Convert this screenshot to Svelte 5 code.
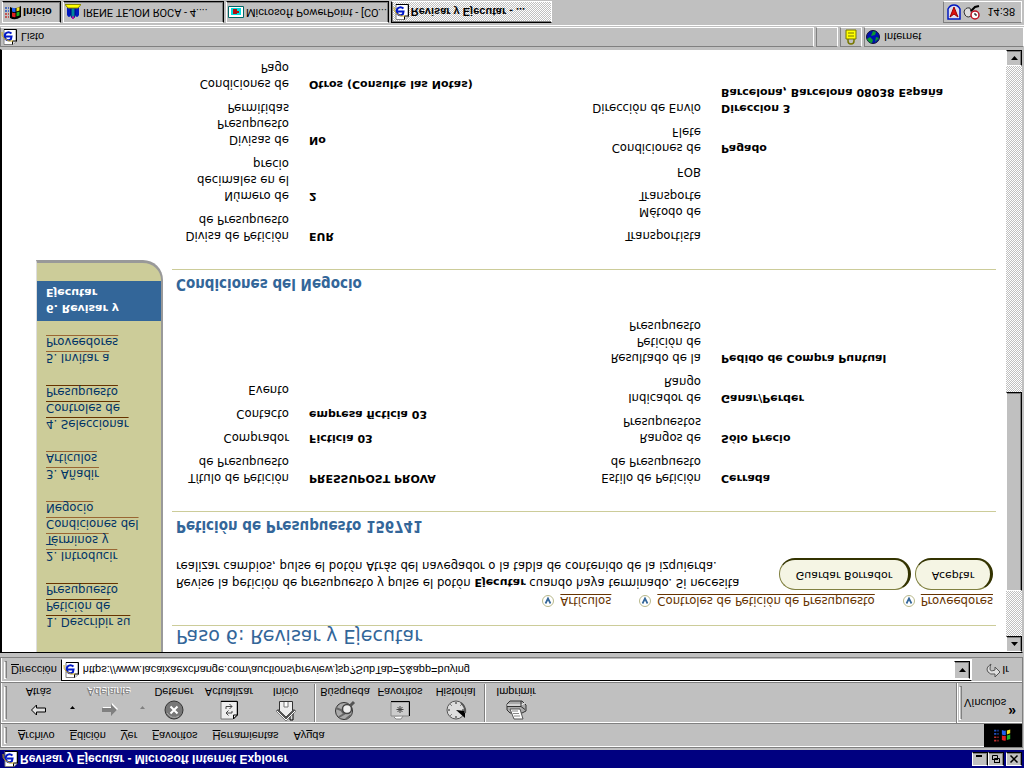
<script>
  const steps = [
    ['1. Describir su', 'Petición de', 'Presupuesto'],
    ['2. Introducir', 'Términos y', 'Condiciones del', 'Negocio'],
    ['3. Añadir', 'Artículos'],
    ['4. Seleccionar', 'Controles de', 'Presupuesto'],
    ['5. Invitar a', 'Proveedores']
  ];
  const visited = [0, 3];
  const tools = [
    { id: 'back', label: 'Atrás', w: 70, drop: true },
    { id: 'fwd', label: 'Adelante', w: 70, drop: true, off: true },
    { id: 'stop', label: 'Detener', w: 54 },
    { id: 'reload', label: 'Actualizar', w: 56 },
    { id: 'home', label: 'Inicio', w: 58, sep: true },
    { id: 'search', label: 'Búsqueda', w: 56 },
    { id: 'fav', label: 'Favoritos', w: 54 },
    { id: 'hist', label: 'Historial', w: 58, sep: true },
    { id: 'print', label: 'Imprimir', w: 58 }
  ];
  const menus = ['Archivo', 'Edición', 'Ver', 'Favoritos', 'Herramientas', 'Ayuda'];
  const sections = [
    {
      title: 'Petición de Presupuesto 156741',
      cols: [
        [
          [['Título de Petición', 'de Presupuesto'], ['PRESSUPOST PROVA']],
          [['Comprador'], ['Ficticia 03']],
          [['Contacto'], ['empresa ficticia 03']],
          [['Evento'], []]
        ],
        [
          [['Estilo de Petición', 'de Presupuesto'], ['Cerrada']],
          [['Rangos de', 'Presupuestos'], ['Sólo Precio']],
          [['Indicador de', 'Rango'], ['Ganar/Perder']],
          [['Resultado de la', 'Petición de', 'Presupuesto'], ['Pedido de Compra Puntual']]
        ]
      ]
    },
    {
      title: 'Condiciones del Negocio',
      cols: [
        [
          [['Divisa de Petición', 'de Presupuesto'], ['EUR']],
          [['Número de', 'decimales en el', 'precio'], ['2']],
          [['Divisas de', 'Presupuesto', 'Permitidas'], ['No']],
          [['Condiciones de', 'Pago'], ['Otros (Consulte las Notas)']],
          [['Dirección de'], ['Direccion 3']]
        ],
        [
          [['Transportista'], []],
          [['Método de', 'Transporte'], []],
          [['FOB'], []],
          [['Condiciones de', 'Flete'], ['Pagado']],
          [['Dirección de Envío'], ['Direccion 3', 'Barcelona, Barcelona 08038 España']]
        ]
      ]
    }
  ];
</script>

{#snippet page(s)}
  <svg width={s} height={s} viewBox="0 0 16 16" aria-hidden="true">
    <path d="M3 .5h9l3 3v12H3z" fill="#fff" stroke="#808080" />
    <path d="M15.500 3.500v12H3" fill="none" stroke="#000" />
    <path d="M11.500 .5v3.500h4" fill="#ddd" stroke="#000" />
    <path d="M10.500 11.500q-3 2.500-6 0q-1.500-3 0-5.500q3-2.500 5.500 0l.5 2.500H5" fill="none" stroke="#0018c8" stroke-width="2" />
    <path d="M1 13Q0 9 4 6t8-2" fill="none" stroke="#c8a818" />
  </svg>
{/snippet}

{#snippet toolIcon(id)}
  <svg width="22" height="22" viewBox="0 0 22 22" aria-hidden="true">
    {#if id === 'back'}
      <path d="M3.500 11l5-5v3h9v4h-9v3z" fill="#e0e0e0" stroke="#000" />
    {:else if id === 'fwd'}
      <path d="M20 12l-6-6v4H5v4h9v4z" fill="#fff" />
      <path d="M19 11l-6-6v4H4v4h9v4z" fill="#808080" />
    {:else if id === 'stop'}
      <circle cx="11" cy="11" r="9" fill="#777" stroke="#333" />
      <path d="M4 8q5-7 12-3" stroke="#aaa" fill="none" />
      <path d="M7.500 7.500l7 7m0-7l-7 7" stroke="#fff" stroke-width="2" />
    {:else if id === 'reload'}
      <path d="M3 2h16v14l-4 4H3z" fill="#eee" stroke="#777" transform="matrix(1 0 0 -1 0 22)" />
      <path d="M3 2.500h16.500V16l-4 4v-4h4" fill="none" stroke="#000" transform="matrix(1 0 0 -1 0 22)" />
      <path d="M14 10V8H8m2.500-2.500L8 8l2.500 2.500M8 12v2.500h6m-2.500-2.500l2.500 2.500-2.500 2.500" fill="none" stroke="#444" />
    {:else if id === 'home'}
      <path d="M4.500 10v9.500h13V10L11 4z" fill="#eee" stroke="#333" />
      <path d="M15 7V1h3v10" fill="#ddd" stroke="#000" />
      <path d="M2 11l9-9 9 9" fill="none" stroke="#555" stroke-width="3" />
      <path d="M2 10l9-9 9 9" fill="none" stroke="#fff" />
      <path d="M9 19v-5h4v5" fill="#fff" stroke="#777" />
    {:else if id === 'search'}
      <circle cx="10" cy="10" r="8.500" fill="#aaa" stroke="#333" />
      <path d="M5 4l5 3-3 4-5 2M12 2l5 4" stroke="#666" fill="none" stroke-width="2" />
      <circle cx="13" cy="12" r="4.500" fill="#eee" stroke="#444" stroke-width="1.500" />
      <path d="M16 15l4 4" stroke="#555" stroke-width="3" />
    {:else if id === 'fav'}
      <path d="M5 4l2-2h5l2 3" fill="#fff" stroke="#888" />
      <path d="M2 5h18v14H2z" fill="#ccc" stroke="#888" />
      <path d="M20.500 5v14.500H2" stroke="#000" fill="none" />
      <path d="M11 8v7m-3.500-3.500h7M8.500 9l5 5m0-5l-5 5" stroke="#444" />
    {:else if id === 'hist'}
      <circle cx="11" cy="11" r="9" fill="#ddd" stroke="#555" />
      <path d="M11 3v2m0 12v2M3 11h2m12 0h2M5.500 5.500l1 1m-1 10l1-1m9 0l1 1" stroke="#222" />
      <path d="M11 11l9-8v7z" fill="#000" />
      <path d="M20 8q1 6-4 10" stroke="#555" stroke-width="2" fill="none" />
    {:else}
      <path d="M2 17l3 3h12l4-4v-6l-4-2H5l-3 3z" fill="#aaa" stroke="#333" />
      <path d="M2 16h14l4 2" fill="none" stroke="#fff" />
      <path d="M2 14.500h14l4-3M16 15v5" fill="none" stroke="#333" />
      <path d="M9 2h9l-3 10H5z" fill="#fff" stroke="#555" />
      <path d="M9 5h6M8 7.500h6M7 10h6" stroke="#888" />
    {/if}
  </svg>
{/snippet}

{#snippet winflag(s)}
  <svg width={s} height={s} viewBox="0 0 18 18" aria-hidden="true">
    <path d="M6 3q5-3 11 1v11q-6-4-11-1z" fill="#000" />
    <path d="M8 4.500q2-1 3.500-.5v4Q10 8 8 8.500z" fill="#e02020" />
    <path d="M12.500 4.500l3 1v4l-3-1z" fill="#20b020" />
    <path d="M8 9.500q2-1 3.500-.5v4q-2-.3-3.500.5z" fill="#2060f0" />
    <path d="M12.500 9.500l3 1v3.500l-3-1z" fill="#f0e020" />
    <path d="M1 4h4M1 7h4" stroke="#c03030" stroke-width="1.500" stroke-dasharray="2 1" />
    <path d="M1 10h4M1 13h4" stroke="#2050c0" stroke-width="1.500" stroke-dasharray="2 1" />
  </svg>
{/snippet}

<div class="screen">
  <header class="title">
    {@render page(16)}
    <h1>Revisar y Ejecutar - Microsoft Internet Explorer</h1>
    <button class="cap" aria-label="Minimizar"><svg width="10" height="10"><path d="M1 8h6" stroke="#000" stroke-width="2" /></svg></button>
    <button class="cap" aria-label="Restaurar"><svg width="10" height="10"><path d="M3.500 1.500h5v4h-5zM3 1.500h6M1.500 4.500h5v4h-5zM1 4.500h6" fill="none" stroke="#000" /></svg></button>
    <button class="cap last" aria-label="Cerrar"><svg width="10" height="10"><path d="M1.500 1.500l7 7m0-7l-7 7" stroke="#000" stroke-width="1.500" /></svg></button>
  </header>

  <nav class="band menu">
    <i class="grip"></i>
    {#each menus as m}
      {#if m === 'Ayuda'}
        <button>Ay<u>u</u>da</button>
      {:else}
        <button><u>{m[0]}</u>{m.slice(1)}</button>
      {/if}
    {/each}
    <span class="logo">{@render winflag(20)}</span>
  </nav>

  <div class="band tools">
    <i class="grip"></i>
    {#each tools as t}
      <button class="tool" class:off={t.off} class:sep={t.sep} style:width="{t.w}px" disabled={t.off}>
        <span class="face">{@render toolIcon(t.id)}<span>{t.label}</span></span>
        {#if t.drop}<svg class="drop" width="5" height="3"><path d="M0 0h5L2.500 3z" fill="currentColor" /></svg>{/if}
      </button>
    {/each}
    <div class="links"><i class="grip"></i><button>Vínculos</button><b>»</b></div>
  </div>

  <form class="band address" onsubmit={(e) => e.preventDefault()}>
    <i class="grip"></i>
    <label for="url"><u>D</u>irección</label>
    <div class="field">
      {@render page(16)}
      <input id="url" value="https://www.lacaixaexchange.com/auctions/preview.jsp?SubTab=2&app=buying" />
      <button type="button" class="bevel" aria-label="Abrir lista"><svg width="7" height="4"><path d="M0 0h7L3.500 4z" /></svg></button>
    </div>
    <button class="go">
      <svg width="16" height="16" viewBox="0 0 16 16" aria-hidden="true"><path d="M6 14Q0 10 3 6q2-3 7-2V1l5 5-5 5V8Q5 6 5 9q0 3 1 5z" fill="#ddd" stroke="#555" /></svg>
      Ir
    </button>
  </form>

  <div class="view">
    <main>
      <aside>
        {#each steps as s, i}
          <a href="#paso" class:seen={visited.includes(i)}>{#each s as line}<span>{line}</span><br />{/each}</a>
        {/each}
        <strong>6. Revisar y<br />Ejecutar</strong>
      </aside>
      <article>
        <h2 class="big">Paso 6: Revisar y Ejecutar</h2>
        <nav class="jump">
          {#each ['Artículos', 'Controles de Petición de Presupuesto', 'Proveedores'] as j}
            <span><svg width="12" height="12" viewBox="0 0 12 12" aria-hidden="true"><circle cx="6" cy="6" r="5.500" fill="#fff" stroke="#b8b88a" /><path d="M3.500 3.500L6 8.500l2.500-5" fill="none" stroke="#369" stroke-width="1.700" /></svg><a href="#seccion">{j}</a></span>
          {/each}
        </nav>
        <div class="intro">
          <p>Revise la petición de presupuesto y pulse el botón <b>Ejecutar</b> cuando haya terminado. Si necesita<br />realizar cambios, pulse el botón Atrás del navegador o la tabla de contenido de la izquierda.</p>
          <button class="pill wide">Guardar Borrador</button>
          <button class="pill">Aceptar</button>
        </div>
        {#each sections as s}
          <section>
            <h2>{s.title}</h2>
            <div class="cols">
              {#each s.cols as col}
                <dl>
                  {#each col as [k, v]}
                    <dt>{#each k as l, i}{#if i}<br />{/if}{l}{/each}</dt>
                    <dd>{#each v as l, i}{#if i}<br />{/if}{l}{/each}</dd>
                  {/each}
                </dl>
              {/each}
            </div>
          </section>
        {/each}
      </article>
    </main>
    <div class="bar">
      <button class="bevel" aria-label="Subir"><svg width="7" height="4"><path d="M0 4h7L3.500 0z" /></svg></button>
      <span class="gap"></span>
      <span class="thumb bevel"></span>
      <span class="rest"></span>
      <button class="bevel" aria-label="Bajar"><svg width="7" height="4"><path d="M0 0h7L3.500 4z" /></svg></button>
    </div>
  </div>

  <div class="status">
    <span class="main">{@render page(16)}Listo</span>
    <span class="cell"></span>
    <span class="cell"><svg width="14" height="16" viewBox="0 0 14 16" aria-hidden="true"><path d="M4 6V4q0-3 3-3t3 3v2" fill="none" stroke="#770" stroke-width="1.500" /><path d="M2 6h10v9H2z" fill="#ff0" stroke="#770" /><path d="M4 9h6M4 12h6" stroke="#770" /></svg></span>
    <span class="zone"><svg width="14" height="14" viewBox="0 0 14 14" aria-hidden="true"><circle cx="7" cy="7" r="6.500" fill="#0010b0" stroke="#113" /><path d="M1 5q2-4 5-4l1 3-3 3zM9 2l4 4-3 1zM5 8l4 1 1 3-3 1z" fill="#0a9a30" /></svg>Internet</span>
  </div>

  <footer>
    <button class="task start">{@render winflag(18)}<b>Inicio</b></button>
    <button class="task"><svg width="16" height="16" viewBox="0 0 16 16" aria-hidden="true"><path d="M2 5q2-4 4 0v7H2zM10 5q2-4 4 0v7h-4z" fill="#0018c0" /><path d="M6 4q2-5 4 0v8H6z" fill="#089" stroke="#008" /><path d="M8 1v3M7 2h2" stroke="#e0a" /><path d="M3 12h10l3 3.500H0z" fill="#ff0" stroke="#880" /></svg><span>IRENE TEJON ROCA - 4....</span></button>
    <button class="task"><svg width="16" height="16" viewBox="0 0 16 16" aria-hidden="true"><path d="M.5 2.500h15v11H.5z" fill="#fff" stroke="#066" /><path d="M3 5h10v7H3z" fill="#0dd" /><path d="M5 6h4v5H5zM9 7h2v2H9z" fill="#b01010" /></svg><span>Microsoft PowerPoint - [CO...</span></button>
    <button class="task on">{@render page(16)}<b>Revisar y Ejecutar - ...</b></button>
    <div class="tray">
      <svg width="14" height="16" viewBox="0 0 14 16" aria-hidden="true"><path d="M1 1v10q2 4 6 4t6-4V1z" fill="#dde" stroke="#0018c0" stroke-width="1.500" /><path d="M3 3l4 10 4-10-4 3z" fill="#e01010" stroke="#900" /></svg>
      <svg width="18" height="16" viewBox="0 0 18 16" aria-hidden="true"><path d="M1 8q1 5 6 4l2-7q-4-4-7 0z" fill="#ddd" stroke="#333" /><path d="M8 9l4 4 4 1" stroke="#000" stroke-width="2" fill="none" /><circle cx="12" cy="5" r="4" fill="#fff" stroke="#c01020" stroke-width="1.500" /><path d="M12 7V5h2" stroke="#000" fill="none" /></svg>
      <time>14:38</time>
    </div>
  </footer>
</div>

<style>
  :global(body) { background: #c0c0c0; overflow: hidden; }
  .screen {
    display: flex; flex-direction: column; height: 100vh;
    transform: scaleY(-1);
    background: #c0c0c0; color: #000;
    font: 11px/14px "Liberation Sans", Arial, sans-serif;
  }
  * { box-sizing: border-box; }
  button { font: inherit; color: inherit; background: none; border: 0; padding: 0; margin: 0; white-space: nowrap; }
  svg { flex: none; display: block; }
  h1, h2, p, dl, dd { margin: 0; font-size: inherit; }
  u { text-underline-offset: 1px; }

  .title { display: flex; align-items: center; height: 18px; padding: 0 2px; background: #000080; color: #fff; flex: none; }
  .title h1 { flex: 1; margin-left: 2px; font-size: 12px; font-weight: bold; }
  .cap, .bevel { display: flex; align-items: center; justify-content: center; background: #c0c0c0; border: 1px solid; border-color: #fff #000 #000 #fff; box-shadow: inset -1px -1px #808080; }
  .cap { width: 16px; height: 14px; }
  .cap.last { margin-left: 2px; }

  .band { display: flex; align-items: center; flex: none; border: 1px solid #808080; border-bottom: 0; box-shadow: inset 1px 1px #fff; margin-right: 1px; }
  .grip { width: 3px; align-self: stretch; margin: 3px 0 3px 3px; border: 1px solid; border-color: #fff #808080 #808080 #fff; flex: none; }
  .menu { height: 24px; margin-top: 2px; }
  .menu button { margin: 0 0 2px 15px; }
  .menu .grip + button { margin-left: 11px; }
  .logo { margin-left: auto; width: 38px; align-self: stretch; display: flex; align-items: center; justify-content: center; background: #000; }
  .tools { height: 41px; }
  .tool { display: flex; align-items: center; height: 38px; flex: none; }
  .face { flex: 1; display: flex; flex-direction: column; align-items: center; }
  .drop { margin: 0 2px 10px 0; }
  .tool.off { color: #808080; text-shadow: 1px 1px #fff; }
  .tool.sep { border-right: 1px solid #808080; box-shadow: 1px 0 #fff; margin-right: 2px; }
  .links { margin-left: auto; width: 66px; height: 40px; display: flex; align-items: center; border-left: 1px solid #808080; box-shadow: inset 1px 0 #fff; }
  .links .grip { margin-left: 2px; }
  .links button { margin-left: 2px; }
  .links b { align-self: flex-start; margin: 4px 0 0 2px; font-size: 14px; line-height: 14px; }
  .address { height: 26px; border-bottom: 1px solid #808080; }
  .address label { margin: 0 4px; }
  .field { flex: 1; height: 22px; display: flex; align-items: center; padding: 1px; background: #fff; border: 1px solid; border-color: #000 #fff #fff #000; }
  .field input { flex: 1; min-width: 0; margin-left: 4px; font: inherit; border: 0; padding: 0; background: none; outline: 0; }
  .field .bevel { width: 16px; height: 18px; }
  .go { width: 50px; display: flex; align-items: center; justify-content: center; gap: 1px; }

  .view { flex: 1; min-height: 0; display: flex; margin-top: 4px; border: 1px solid #808080; border-color: #000 #c0c0c0 #c0c0c0 #000; border-left-width: 2px; margin-right: 1px; background: #fff; }
  main { flex: 1; min-width: 0; overflow: hidden; display: flex; align-items: flex-start; font: 13px/16px "DejaVu Sans Condensed", "DejaVu Sans", Verdana, sans-serif; }
  aside { width: 127px; margin-left: 34px; flex: none; padding: 22px 0 18px; background: #cccc99; border: 1px solid #a0a0a0; border-top: 0; border-left-color: #ddd; border-right: 2px solid #999; border-bottom: 3px solid #999; border-radius: 0 0 20px 0; display: flex; flex-direction: column; }
  aside a { margin: 0 9px 18px; color: #003366; text-decoration: none; white-space: nowrap; }
  aside a span { text-decoration: underline 1px #996633; text-decoration-skip-ink: none; text-underline-offset: 2px; }
  aside a.seen span { text-decoration-color: #663300; }
  aside strong, dd, p b { font-family: "DejaVu Sans", Verdana, sans-serif; font-size: 11px; font-weight: bold; }
  aside strong { background: #336699; color: #fff; padding: 5px 9px 3px; margin-top: -5px; }
  article { flex: 1; min-width: 0; padding: 5px 10px 0 13px; }
  h2 { color: #336699; font-size: 15px; line-height: 20px; border-bottom: 1px solid #cccc99; padding: 0 0 4px 4px; margin-left: -4px; }
  h2.big { font-family: "DejaVu Sans", Verdana, sans-serif; font-size: 19px; font-weight: normal; padding-bottom: 1px; }
  .jump { display: flex; justify-content: flex-end; gap: 28px; padding: 16px 3px 0 0; white-space: nowrap; }
  .jump span { display: flex; align-items: center; gap: 6px; }
  .jump a { color: #663300; text-decoration: underline 1px #663300; text-decoration-skip-ink: none; text-underline-offset: 2px; }
  .intro { display: flex; align-items: center; gap: 4px; margin-top: 2px; padding-right: 3px; }
  .intro p { flex: 1; min-width: 0; white-space: nowrap; }
  .pill { flex: none; width: 78px; height: 32px; background: #f5f5e4; border: 1px solid #808040; border-right: 3px solid #333300; border-bottom: 2px solid #333300; border-radius: 16px; font: 11px/14px "DejaVu Sans", Verdana, sans-serif; }
  .pill.wide { width: 132px; }
  section { margin-top: 22px; }
  section + section { margin-top: 24px; }
  .cols { display: grid; grid-template-columns: 412fr 408fr; padding-top: 25px; }
  dl { display: grid; grid-template-columns: 113px 1fr; gap: 8px 20px; align-content: start; }
  dt { text-align: right; white-space: nowrap; }
  dd { white-space: nowrap; }

  .bar { width: 16px; flex: none; display: flex; flex-direction: column; background: repeating-conic-gradient(#fff 0 25%, #c0c0c0 0 50%) 0 0 / 2px 2px; }
  .bar button { height: 16px; flex: none; }
  .gap { flex: 45; }
  .thumb { flex: 197; }
  .rest { flex: 327; }

  .status { height: 20px; margin: 2px 0 1px; flex: none; display: flex; gap: 2px; }
  .status span { display: flex; align-items: center; border: 1px solid; border-color: #808080 #fff #fff #808080; }
  .status .main { flex: 1; gap: 4px; }
  .status .cell { width: 22px; justify-content: center; }
  .status .zone { width: 160px; gap: 4px; padding-left: 1px; }

  footer { height: 26px; flex: none; border-top: 1px solid #fff; display: flex; align-items: center; gap: 2px; padding: 0 2px; }
  .task { flex: none; min-width: 161px; height: 22px; display: flex; align-items: center; gap: 2px; padding: 0 1px; border: 1px solid; border-color: #fff #000 #000 #fff; box-shadow: inset -1px -1px #808080; }
  .task span { font-family: Roboto, "Liberation Sans", sans-serif; }
  .task.start { min-width: 59px; gap: 1px; }
  .task.on { border-color: #000 #fff #fff #000; box-shadow: inset 1px 1px #808080; background: repeating-conic-gradient(#fff 0 25%, #c0c0c0 0 50%) 0 0 / 2px 2px; }
  .tray { margin-left: auto; width: 79px; height: 22px; display: flex; align-items: center; gap: 2px; padding: 0 3px; border: 1px solid; border-color: #808080 #fff #fff #808080; }
  .tray time { margin-left: auto; padding-right: 3px; }
</style>
